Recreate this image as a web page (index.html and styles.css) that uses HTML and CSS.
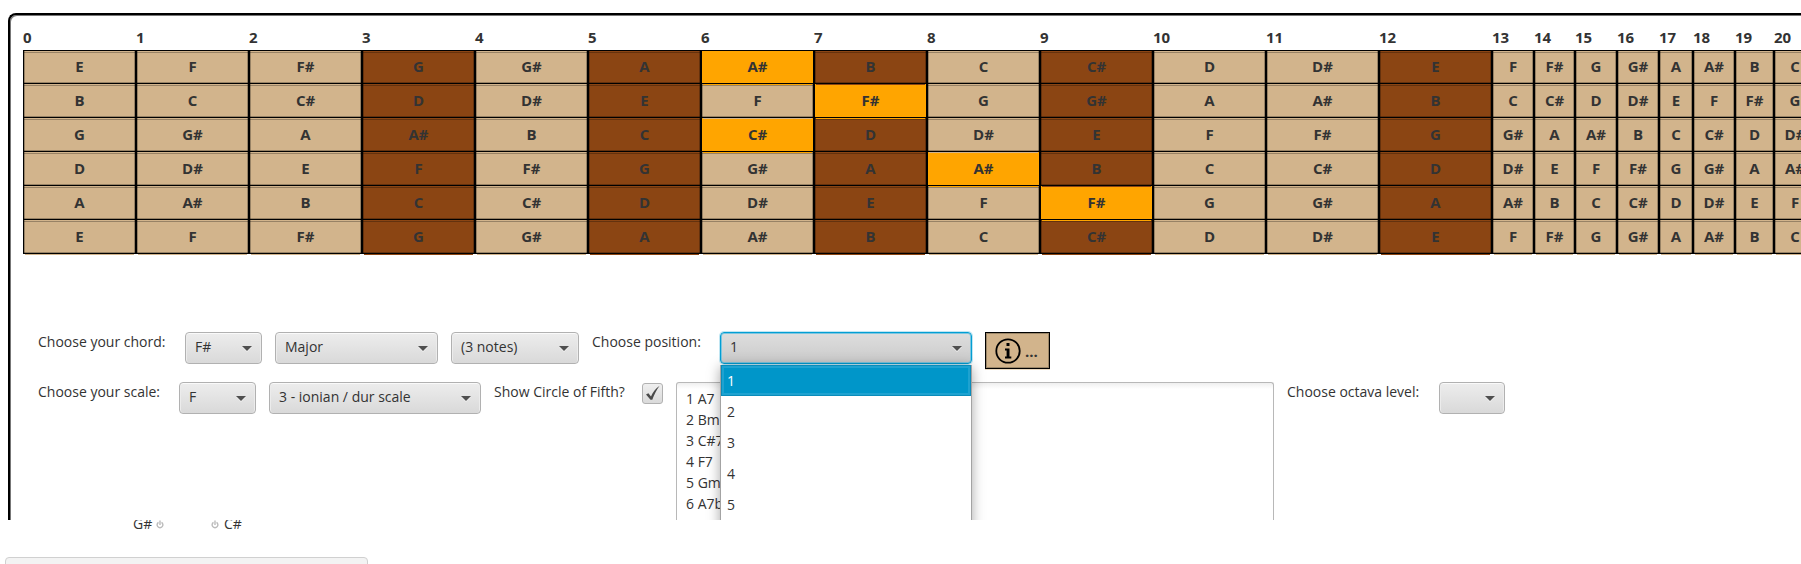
FILE: index.html
```html
<!DOCTYPE html>
<html lang="en">
<head>
<meta charset="utf-8">
<title>Fretboard</title>
<link rel="stylesheet" href="styles.css">
</head>
<body>
<main class="frame">
  <table class="fretboard">
    <colgroup>
      <col class="fret" span="13">
      <col class="fret-m"><col class="fret-s"><col class="fret-m"><col class="fret-m"><col class="fret-xs"><col class="fret-m"><col class="fret-n"><col class="fret-m">
    </colgroup>
    <thead>
      <tr><th>0</th><th>1</th><th>2</th><th>3</th><th>4</th><th>5</th><th>6</th><th>7</th><th>8</th><th>9</th><th>10</th><th>11</th><th>12</th><th>13</th><th>14</th><th>15</th><th>16</th><th>17</th><th>18</th><th>19</th><th>20</th></tr>
    </thead>
    <tbody>
      <tr><td>E</td><td>F</td><td>F#</td><td class="dark">G</td><td>G#</td><td class="dark">A</td><td class="hit">A#</td><td class="dark">B</td><td>C</td><td class="dark">C#</td><td>D</td><td>D#</td><td class="dark">E</td><td>F</td><td>F#</td><td>G</td><td>G#</td><td>A</td><td>A#</td><td>B</td><td>C</td></tr>
      <tr><td>B</td><td>C</td><td>C#</td><td class="dark">D</td><td>D#</td><td class="dark">E</td><td>F</td><td class="hit">F#</td><td>G</td><td class="dark">G#</td><td>A</td><td>A#</td><td class="dark">B</td><td>C</td><td>C#</td><td>D</td><td>D#</td><td>E</td><td>F</td><td>F#</td><td>G</td></tr>
      <tr><td>G</td><td>G#</td><td>A</td><td class="dark">A#</td><td>B</td><td class="dark">C</td><td class="hit">C#</td><td class="dark">D</td><td>D#</td><td class="dark">E</td><td>F</td><td>F#</td><td class="dark">G</td><td>G#</td><td>A</td><td>A#</td><td>B</td><td>C</td><td>C#</td><td>D</td><td>D#</td></tr>
      <tr><td>D</td><td>D#</td><td>E</td><td class="dark">F</td><td>F#</td><td class="dark">G</td><td>G#</td><td class="dark">A</td><td class="hit">A#</td><td class="dark">B</td><td>C</td><td>C#</td><td class="dark">D</td><td>D#</td><td>E</td><td>F</td><td>F#</td><td>G</td><td>G#</td><td>A</td><td>A#</td></tr>
      <tr><td>A</td><td>A#</td><td>B</td><td class="dark">C</td><td>C#</td><td class="dark">D</td><td>D#</td><td class="dark">E</td><td>F</td><td class="hit">F#</td><td>G</td><td>G#</td><td class="dark">A</td><td>A#</td><td>B</td><td>C</td><td>C#</td><td>D</td><td>D#</td><td>E</td><td>F</td></tr>
      <tr><td>E</td><td>F</td><td>F#</td><td class="dark">G</td><td>G#</td><td class="dark">A</td><td>A#</td><td class="dark">B</td><td>C</td><td class="dark">C#</td><td>D</td><td>D#</td><td class="dark">E</td><td>F</td><td>F#</td><td>G</td><td>G#</td><td>A</td><td>A#</td><td>B</td><td>C</td></tr>
    </tbody>
  </table>

  <form class="controls">
    <div class="row row-chord">
      <label class="label-chord" for="root">Choose your chord:</label>
      <span class="combo combo-note"><select id="root"><option>F#</option></select></span>
      <span class="combo combo-type"><select id="type" aria-label="Chord type"><option>Major</option></select></span>
      <span class="combo combo-count"><select id="count" aria-label="Number of notes"><option>(3 notes)</option></select></span>
      <label class="label-position" for="position">Choose position:</label>
      <span class="combo combo-position open">
        <select id="position"><option>1</option><option>2</option><option>3</option><option>4</option><option>5</option></select>
        <ul class="popup" role="listbox" aria-label="Positions">
          <li role="option" aria-selected="true">1</li>
          <li role="option">2</li>
          <li role="option">3</li>
          <li role="option">4</li>
          <li role="option">5</li>
        </ul>
      </span>
      <button class="info" type="button">
        <svg viewBox="0 0 26 26" aria-hidden="true">
          <circle cx="13" cy="13" r="11.7" fill="none" stroke="#000" stroke-width="1.8"/>
          <path d="M11.500 5h3v3h-3zM10 10.500h4.500v8h1.800v1.900H10v-1.900h1.600v-6.100H10z"/>
        </svg>
        <span>...</span>
      </button>
    </div>
    <div class="row">
      <label class="label-scale" for="scale-root">Choose your scale:</label>
      <span class="combo combo-note"><select id="scale-root"><option>F</option></select></span>
      <span class="combo combo-scale"><select id="scale" aria-label="Scale"><option>3 - ionian / dur scale</option></select></span>
      <label class="label-circle" for="circle">Show Circle of Fifth?</label>
      <span class="check">
        <input type="checkbox" id="circle" checked>
        <svg viewBox="0 0 21 21" aria-hidden="true"><path d="M4 11.500l2.400-1.300 2.600 3.200C11 9 13.500 5.500 17.600 2.800c-3.200 4.500-5.400 8.800-7.300 14H8.500z"/></svg>
      </span>
      <textarea class="chords" aria-label="Scale chords" rows="6">1 A7
2 Bm
3 C#7
4 F7
5 Gm
6 A7b</textarea>
      <label class="label-octava" for="octava">Choose octava level:</label>
      <span class="combo combo-octava"><select id="octava"><option></option></select></span>
    </div>
  </form>
</main>

<section class="circle-notes">
  <span class="note">G#</span>
  <svg viewBox="0 0 8 9" aria-hidden="true"><path d="M2.500 2.300a2.900 2.900 0 1 0 3 0M4 .5v4.500" fill="none" stroke="#bbb" stroke-width="1.400"/></svg>
  <svg class="second" viewBox="0 0 8 9" aria-hidden="true"><path d="M2.500 2.300a2.900 2.900 0 1 0 3 0M4 .5v4.500" fill="none" stroke="#bbb" stroke-width="1.400"/></svg>
  <span class="note">C#</span>
</section>
<div class="tray"></div>
</body>
</html>
```

FILE: styles.css
```css
* {
  box-sizing: border-box;
}

html {
  overflow: hidden;
}

body {
  margin: 0;
  background: #fff;
  color: #333;
  font: 14px/20px "Open Sans", "Noto Sans", sans-serif;
}

.frame {
  margin: 13px 0 0 8px;
  padding: 1px 0 0 13px;
  overflow: hidden;
  border: solid #000;
  border-width: 2px 0 0 2px;
  border-top-left-radius: 8px;
  box-shadow: inset 1px 1px 0 #777;
}

/* Fretboard */
.fretboard {
  table-layout: fixed;
  width: 1793px;
  border-collapse: separate;
  border-spacing: 0;
  font-size: 15px;
  font-weight: 700;
}

.fret { width: 113px; }
.fret-m { width: 42px; }
.fret-s { width: 41px; }
.fret-n { width: 39px; }
.fret-xs { width: 34px; }

.fretboard th {
  height: 34px;
  padding: 10px 0 2px;
  text-align: left;
  line-height: 22px;
}

.fretboard td {
  --wood: #d2b48c;
  --edge: rgba(0, 0, 0, 0.28);
  position: relative;
  height: 34px;
  padding: 0 0 2px;
  border: solid #000;
  border-width: 0 1px 1px;
  background: linear-gradient(var(--edge), var(--edge)) 0 1px / 100% 1px no-repeat var(--wood);
  box-shadow: inset 1px 0 0 var(--edge), inset -1px 0 0 var(--edge), inset 0 -1px 0 var(--edge);
  text-align: center;
}

.fretboard td.dark {
  --wood: #8b4513;
}

.fretboard td.hit {
  --wood: #ffa500;
  --edge: transparent;
}

.fretboard tbody tr:first-child td {
  border-top-width: 1px;
}

/* the sliver of wood under each string */
.fretboard td::after {
  content: "";
  position: absolute;
  z-index: 1;
  left: 1px;
  right: 1px;
  bottom: -2px;
  height: 1px;
  background: var(--wood);
}

/* Controls */
.controls {
  display: flex;
  flex-direction: column;
  gap: 13px;
  padding: 78px 0 0 15px;
}

.row {
  display: flex;
  align-items: flex-start;
  gap: 13px;
}

.row > * {
  flex: none;
}

.row-chord {
  position: relative;
  z-index: 2;
}

label {
  white-space: nowrap;
}

.label-chord { width: 134px; }
.label-scale { width: 128px; }
.label-position { width: 115px; }
.label-circle { width: 135px; }
.label-octava { width: 139px; }

.combo {
  position: relative;
  height: 32px;
}

.combo-note { width: 77px; }
.combo-type { width: 163px; }
.combo-count { width: 128px; }
.combo-position { width: 252px; }
.combo-scale { width: 212px; }
.combo-octava { width: 66px; }

.combo select {
  appearance: none;
  display: block;
  width: 100%;
  height: 100%;
  margin: 0;
  padding: 0 24px 2px 9px;
  border: 1px solid #b1b1b1;
  border-radius: 4px;
  background: linear-gradient(#ededed, #d9d9d9);
  box-shadow: inset 0 1px 0 #fafafa, inset 1px 0 0 #ececec, inset -1px 0 0 #ececec;
  color: inherit;
  font: inherit;
}

.combo::after {
  content: "";
  position: absolute;
  top: 14px;
  right: 10px;
  border: solid transparent;
  border-width: 5px 5px 0;
  border-top-color: #4f4f4f;
  filter: drop-shadow(0 1px 0 #f2f2f2);
  pointer-events: none;
}

.combo.open select {
  border-color: #039ed3;
  background: linear-gradient(#dedede, #cacaca);
  box-shadow: inset 0 0 0 1px #7cc6e0, 0 0 0 1px #c0e6f3;
}

.popup {
  position: absolute;
  top: 33px;
  left: 0;
  width: 100%;
  height: 172px;
  margin: 0;
  padding: 0;
  border: solid #a3a3a3;
  border-width: 0 1px;
  background: #fff;
  box-shadow: 0 2px 12px rgba(0, 0, 0, 0.35);
  list-style: none;
}

.popup li {
  height: 31px;
  padding-left: 6px;
  line-height: 31px;
}

.popup [aria-selected="true"] {
  background: #0096c9;
  box-shadow: inset 0 0 0 1px #0a8cba, inset 0 0 0 3px #1ea2d0;
  color: #fff;
}

.info {
  display: flex;
  align-items: center;
  gap: 4px;
  width: 65px;
  height: 37px;
  padding: 0 9px;
  border: 1px solid #000;
  border-radius: 0;
  background: #d2b48c;
  box-shadow: inset 0 0 0 1px #9c8768, 0 1px 0 #ecdcc4;
  color: #333;
  font: 700 15px/22px "Open Sans", "Noto Sans", sans-serif;
}

.info svg {
  flex: none;
  width: 26px;
  height: 26px;
}

.check {
  position: relative;
  width: 21px;
  height: 21px;
  margin-top: 1px;
}

.check input {
  appearance: none;
  display: block;
  width: 100%;
  height: 100%;
  margin: 0;
  border: 1px solid #b1b1b1;
  border-radius: 3px;
  background: linear-gradient(#efefef, #dadada);
}

.check svg {
  position: absolute;
  inset: 0;
  fill: #4a4a4a;
  pointer-events: none;
}

.chords {
  width: 598px;
  height: 138px;
  margin: 0;
  padding: 5px 9px 0;
  overflow: hidden;
  resize: none;
  border: 1px solid #b8b8b8;
  border-bottom: 0;
  border-radius: 3px 3px 0 0;
  background: linear-gradient(#efefef, #fff 6px);
  color: inherit;
  font: inherit;
  line-height: 21px;
}

/* Circle of fifths, upper edge scrolled out of view */
.circle-notes {
  display: flex;
  align-items: flex-start;
  height: 12px;
  margin-bottom: 25px;
  padding-left: 133px;
  gap: 5px;
  overflow: hidden;
  line-height: 8px;
}

.circle-notes svg {
  width: 8px;
  height: 9px;
}

.circle-notes .second {
  margin-left: 42px;
}

.circle-notes .note {
  width: 18px;
}

.tray {
  width: 363px;
  height: 24px;
  margin-left: 5px;
  border: 1px solid #d0d0d0;
  border-radius: 4px;
  background: #f3f3f3;
}
```
